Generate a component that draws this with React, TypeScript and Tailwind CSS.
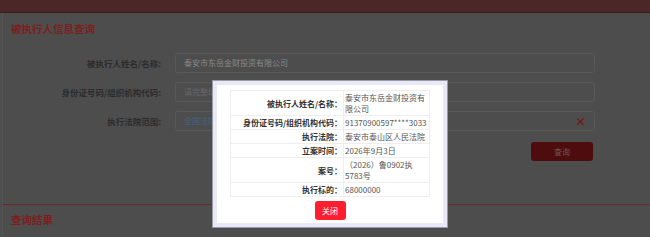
import React from "react";

const F = { fontFamily: '"Noto Sans CJK SC", "Noto Sans", sans-serif' };

const rows: { label: string; value: React.ReactNode; two?: boolean }[] = [
  { label: "被执行人姓名/名称：", value: <>泰安市东岳金财投资有<br />限公司</>, two: true },
  { label: "身份证号码/组织机构代码：", value: "91370900597****3033" },
  { label: "执行法院：", value: "泰安市泰山区人民法院" },
  { label: "立案时间：", value: "2026年9月3日" },
  { label: "案号：", value: <>（2026）鲁0902执<br />5783号</>, two: true },
  { label: "执行标的：", value: "68000000" },
];

export default function App() {
  return (
    <div className="relative w-[650px] h-[237px] overflow-hidden bg-[#4d4d4d]" style={F}>
      <div className="h-[13px] bg-[#4b2727] border-b border-[#3f1c1c]" />
      <div className="ml-[2px] border-l border-[#555] h-full">
        <div className="pl-[8px] pt-[9px] h-[40px] text-[10.5px] font-bold text-[#7e1e1e] leading-[14px]">被执行人信息查询</div>
        <div className="flex flex-col gap-[9px]">
          {[
            { l: "被执行人姓名/名称:", v: "泰安市东岳金财投资有限公司", c: "text-[#8a8a8a]" },
            { l: "身份证号码/组织机构代码:", v: "请完整填写", c: "text-[#666]" },
            { l: "执行法院范围:", v: "全国法院", c: "text-[#3e6685]", x: true },
          ].map((r, i) => (
            <div key={i} className="flex items-center">
              <div className="w-[158px] text-right text-[8.5px] font-bold text-[#2c2c2c]">{r.l}</div>
              <div className="ml-[14px] w-[420px] h-[20px] border border-[#585858] rounded-[3px] flex items-center px-[8px] justify-between">
                <span className={`text-[8px] ${r.c}`}>{r.v}</span>
                {r.x && <span className="text-[11px] font-bold text-[#7a1212] leading-none">×</span>}
              </div>
            </div>
          ))}
        </div>
        <div className="flex mt-[11px]">
          <div className="ml-[528px] w-[62px] h-[19px] rounded-[3px] bg-[#4f0c0e] flex items-center justify-center text-[8px] text-[#6e5a5a]">查询</div>
        </div>
        <div className="mt-[43px] border-t border-[#6a2a2a]" />
        <div className="pl-[8px] pt-[8px] text-[10.5px] font-bold text-[#7e1e1e] leading-[14px]">查询结果</div>
      </div>

      <div className="absolute left-[212px] top-[80px] w-[236px] h-[148px] border border-[#9a9aa6] bg-[#e8e8f6] p-[4px]">
        <div className="bg-white h-full flex flex-col items-center pt-[5px]">
          <table className="w-[200px] border-collapse text-[8px] leading-[11px]">
            <tbody>
              {rows.map((r, i) => (
                <tr key={i}>
                  <td className="w-[113px] border border-[#eeeeee] text-right font-bold text-[#333] py-[1px] pr-[1px] align-middle">{r.label}</td>
                  <td className="border border-[#eeeeee] text-[#555] py-[1px] pl-[1px] align-middle">{r.value}</td>
                </tr>
              ))}
            </tbody>
          </table>
          <div className="mt-[4px] w-[31px] h-[19px] rounded-[3px] bg-[#fd1f2f] text-white text-[8px] flex items-center justify-center">关闭</div>
        </div>
      </div>
    </div>
  );
}
